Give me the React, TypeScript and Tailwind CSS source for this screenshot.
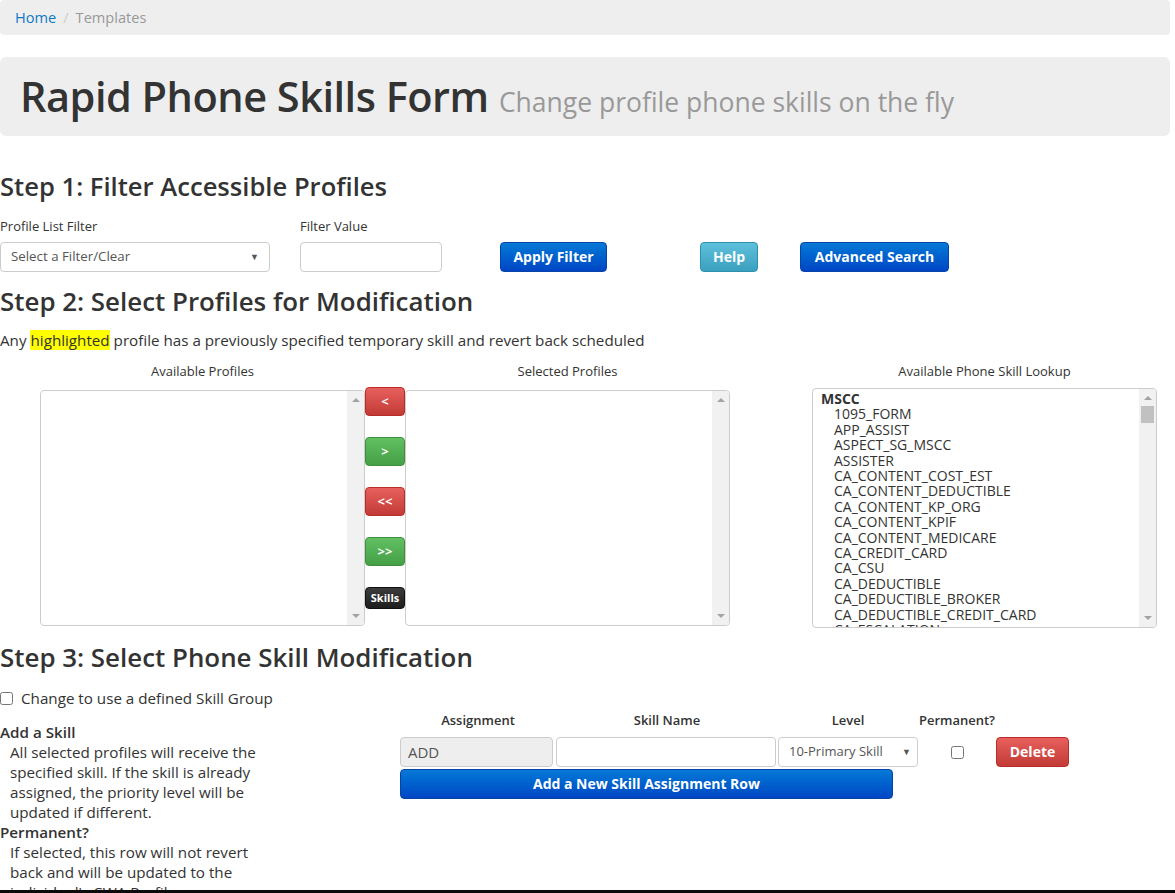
import React from "react";

const skills = [
  "1095_FORM",
  "APP_ASSIST",
  "ASPECT_SG_MSCC",
  "ASSISTER",
  "CA_CONTENT_COST_EST",
  "CA_CONTENT_DEDUCTIBLE",
  "CA_CONTENT_KP_ORG",
  "CA_CONTENT_KPIF",
  "CA_CONTENT_MEDICARE",
  "CA_CREDIT_CARD",
  "CA_CSU",
  "CA_DEDUCTIBLE",
  "CA_DEDUCTIBLE_BROKER",
  "CA_DEDUCTIBLE_CREDIT_CARD",
  "CA_ESCALATION",
  "CA_GENERAL",
];

function ScrollTrack({ thumb }: { thumb?: boolean }) {
  return (
    <div className="flex w-[17px] shrink-0 flex-col items-center bg-[#f1f1f1]">
      <div className="mt-[7px] h-0 w-0 border-x-[4px] border-b-[4px] border-x-transparent border-b-[#a3a3a3]" />
      {thumb && <div className="mt-[6px] h-[17px] w-[13px] bg-[#c1c1c1]" />}
      <div className="flex-1" />
      <div className="mb-[7px] h-0 w-0 border-x-[4px] border-t-[4px] border-x-transparent border-t-[#a3a3a3]" />
    </div>
  );
}

function MoveButton({ label, color }: { label: string; color: "red" | "green" }) {
  return (
    <div
      className={`flex h-[29px] w-[40px] items-center justify-center rounded-[4px] border text-[13px] font-bold text-white ${
        color === "red"
          ? "border-[#b92c28] bg-gradient-to-b from-[#e8605d] to-[#c23a36]"
          : "border-[#3e8f3e] bg-gradient-to-b from-[#62bf62] to-[#45a045]"
      }`}
    >
      {label}
    </div>
  );
}

export default function App() {
  return (
    <div className="min-h-[893px] bg-white font-['Open_Sans',sans-serif] text-[#333]">
      <div className="w-[1170px]">
        {/* breadcrumb */}
        <div className="flex h-[35px] items-center rounded-[4px] bg-[#eee] px-[15px] text-[14.6px]">
          <span className="text-[#1079c6]">Home</span>
          <span className="px-[7px] text-[#ccc]">/</span>
          <span className="text-[#999]">Templates</span>
        </div>

        {/* jumbotron */}
        <div className="mt-[22px] flex h-[79px] items-center rounded-[6px] bg-[#eee] px-[20px]">
          <h1 className="text-[41.5px] font-semibold leading-none tracking-[-0.5px] text-[#333]">
            Rapid Phone Skills Form{" "}
            <small className="text-[26.5px] font-normal tracking-normal text-[#999]">
              Change profile phone skills on the fly
            </small>
          </h1>
        </div>

        {/* step 1 */}
        <h2 className="mt-[37px] text-[25.6px] font-semibold leading-[28px]">Step 1: Filter Accessible Profiles</h2>
        <div className="mt-[16px] flex items-end text-[13px]">
          <div className="w-[300px]">
            <div className="mb-[7px] leading-[18px]">Profile List Filter</div>
            <div className="flex h-[30px] w-[270px] items-center justify-between rounded-[4px] border border-[#ccc] px-[10px] text-[13.3px] text-[#555]">
              <span>Select a Filter/Clear</span>
              <span className="text-[9px]">▼</span>
            </div>
          </div>
          <div className="w-[200px]">
            <div className="mb-[7px] leading-[18px]">Filter Value</div>
            <div className="h-[30px] w-[142px] rounded-[4px] border border-[#ccc]" />
          </div>
          <div className="w-[200px]">
            <div className="flex h-[30px] w-[107px] items-center justify-center rounded-[4px] border border-[#0844a8] bg-gradient-to-b from-[#0a79d6] to-[#0045c4] pb-[1px] text-[14px] font-bold text-white">
              Apply Filter
            </div>
          </div>
          <div className="w-[100px]">
            <div className="flex h-[30px] w-[58px] items-center justify-center rounded-[4px] border border-[#2f8fae] bg-gradient-to-b from-[#5ec0db] to-[#3aa0bf] pb-[1px] text-[14px] font-bold text-white">
              Help
            </div>
          </div>
          <div>
            <div className="flex h-[30px] w-[149px] items-center justify-center rounded-[4px] border border-[#0844a8] bg-gradient-to-b from-[#0a79d6] to-[#0045c4] pb-[1px] text-[14px] font-bold text-white">
              Advanced Search
            </div>
          </div>
        </div>

        {/* step 2 */}
        <h2 className="mt-[15px] text-[25.9px] font-semibold leading-[28px]">Step 2: Select Profiles for Modification</h2>
        <p className="mt-[15px] text-[15.2px] leading-[20px]">
          Any <span className="bg-[#ffff00]">highlighted</span> profile has a previously specified temporary skill and revert back scheduled
        </p>
        <div className="mt-[12px] flex text-[13px] leading-[18px]">
          <div className="ml-[40px] w-[325px] text-center">Available Profiles</div>
          <div className="ml-[40px] w-[325px] text-center">Selected Profiles</div>
          <div className="ml-[82px] w-[345px] text-center">Available Phone Skill Lookup</div>
        </div>
        <div className="mt-[7px] flex items-start">
          <div className="ml-[40px] mt-[3px] flex h-[236px] w-[325px] justify-end overflow-hidden rounded-[4px] border border-[#ccc]">
            <ScrollTrack />
          </div>
          <div className="flex w-[40px] flex-col gap-[21px]">
            <MoveButton label="<" color="red" />
            <MoveButton label=">" color="green" />
            <MoveButton label="<<" color="red" />
            <MoveButton label=">>" color="green" />
            <div className="flex h-[22px] w-[40px] items-center justify-center rounded-[4px] border border-[#111] bg-gradient-to-b from-[#3c3c3c] to-[#1e1e1e] text-[11px] font-bold text-white">
              Skills
            </div>
          </div>
          <div className="mt-[3px] flex h-[236px] w-[325px] justify-end overflow-hidden rounded-[4px] border border-[#ccc]">
            <ScrollTrack />
          </div>
          <div className="ml-[82px] mt-[1px] flex h-[240px] w-[345px] overflow-hidden rounded-[4px] border border-[#ccc]">
            <div className="flex-1 overflow-hidden pl-[8px] pt-[2px] text-[14px] leading-[15.4px]">
              <div className="font-bold">MSCC</div>
              {skills.map((s) => (
                <div key={s} className="pl-[13px]">
                  {s}
                </div>
              ))}
            </div>
            <ScrollTrack thumb />
          </div>
        </div>

        {/* step 3 */}
        <h2 className="mt-[15px] text-[25.9px] font-semibold leading-[28px]">Step 3: Select Phone Skill Modification</h2>
        <label className="mt-[17px] flex items-center text-[15.2px] leading-[20px]">
          <input type="checkbox" readOnly className="m-0 h-[13px] w-[13px]" />
          <span className="ml-[8px]">Change to use a defined Skill Group</span>
        </label>
        <div className="flex items-start">
          <div className="mt-[14px] w-[400px] text-[15.2px] leading-[20px]">
            <div className="font-semibold">Add a Skill</div>
            <div className="pl-[10px]">
              All selected profiles will receive the
              <br />
              specified skill. If the skill is already
              <br />
              assigned, the priority level will be
              <br />
              updated if different.
            </div>
            <div className="font-semibold">Permanent?</div>
            <div className="pl-[10px]">
              If selected, this row will not revert
              <br />
              back and will be updated to the
              <br />
              individual's CWA Profile as a
              <br />
              permanent skill assignment.
            </div>
          </div>
          <div className="mt-[2px]">
            <div className="flex text-[13px] font-semibold leading-[20px]">
              <div className="w-[156px] text-center">Assignment</div>
              <div className="w-[222px] text-center">Skill Name</div>
              <div className="w-[140px] text-center">Level</div>
              <div className="w-[78px] text-center">Permanent?</div>
            </div>
            <div className="mt-[7px] flex items-center">
              <div className="flex h-[30px] w-[153px] items-center rounded-[4px] border border-[#ccc] bg-[#eee] px-[7px] text-[15px] text-[#555]">
                ADD
              </div>
              <div className="ml-[3px] h-[30px] w-[220px] rounded-[4px] border border-[#ccc]" />
              <div className="ml-[2px] flex h-[30px] w-[140px] items-center justify-between rounded-[4px] border border-[#ccc] pl-[10px] pr-[6px] text-[13px] text-[#555]">
                <span>10-Primary Skill</span>
                <span className="text-[9px]">▼</span>
              </div>
              <div className="flex w-[78px] justify-center">
                <input type="checkbox" readOnly className="m-0 h-[13px] w-[13px]" />
              </div>
              <div className="flex h-[30px] w-[73px] items-center justify-center rounded-[4px] border border-[#b92c28] bg-gradient-to-b from-[#e8605d] to-[#c23a36] pb-[1px] text-[14px] font-bold text-white">
                Delete
              </div>
            </div>
            <div className="mt-[2px] flex h-[30px] w-[493px] items-center justify-center rounded-[4px] border border-[#0844a8] bg-gradient-to-b from-[#0a79d6] to-[#0045c4] pb-[1px] text-[14px] font-bold text-white">
              Add a New Skill Assignment Row
            </div>
          </div>
        </div>
      </div>
      <div className="fixed bottom-0 left-0 h-[3px] w-full bg-[#0b0b0b]" />
    </div>
  );
}
